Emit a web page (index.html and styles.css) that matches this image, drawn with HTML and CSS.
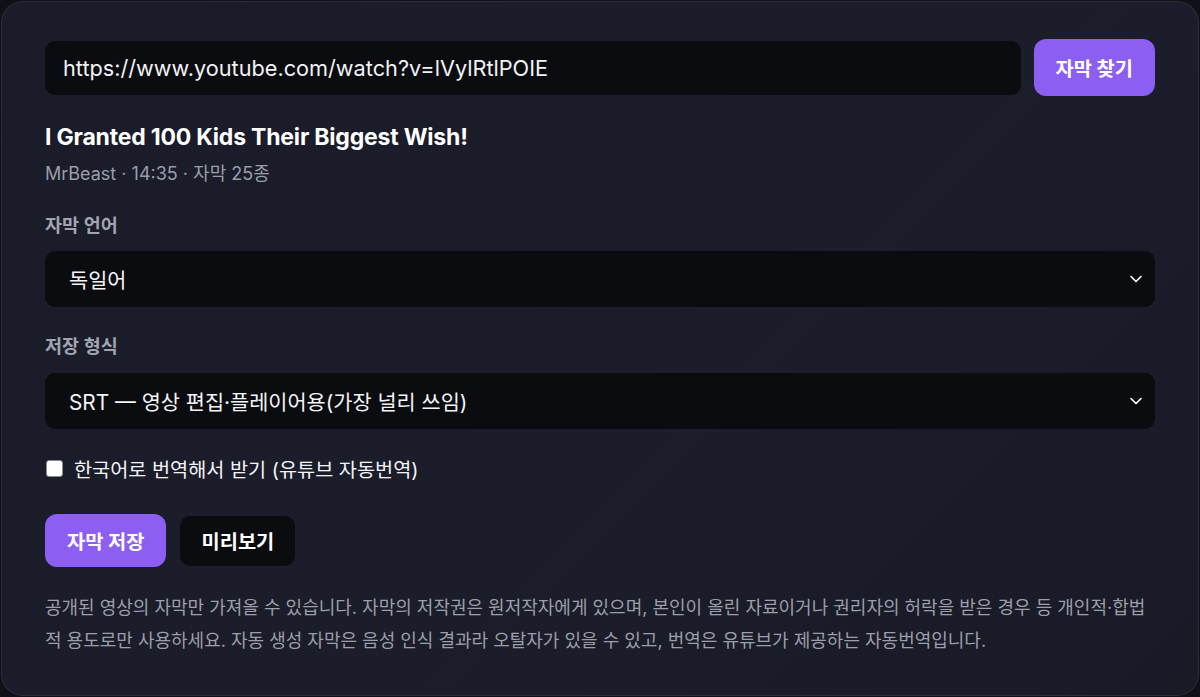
FILE: index.html
```html
<!DOCTYPE html>
<html lang="ko">
<head>
<meta charset="utf-8">
<title>자막 다운로더</title>
<link rel="stylesheet" href="styles.css">
</head>
<body>
<main class="card">
  <div class="url-row">
    <div class="input">https://www.youtube.com/watch?v=lVylRtlPOIE</div>
    <button class="btn btn-primary">자막 찾기</button>
  </div>

  <h1 class="title">I Granted 100 Kids Their Biggest Wish!</h1>
  <p class="meta">MrBeast · 14:35 · 자막 25종</p>

  <label class="label">자막 언어</label>
  <div class="select">
    <span>독일어</span>
    <svg class="chev" width="12" height="8" viewBox="0 0 12 8"><path d="M1 1.5 L6 6.5 L11 1.5" fill="none" stroke="#fff" stroke-width="1.6" stroke-linecap="round" stroke-linejoin="round"/></svg>
  </div>

  <label class="label label-2">저장 형식</label>
  <div class="select">
    <span>SRT — 영상 편집·플레이어용(가장 널리 쓰임)</span>
    <svg class="chev" width="12" height="8" viewBox="0 0 12 8"><path d="M1 1.5 L6 6.5 L11 1.5" fill="none" stroke="#fff" stroke-width="1.6" stroke-linecap="round" stroke-linejoin="round"/></svg>
  </div>

  <label class="check-row">
    <span class="checkbox"></span>
    <span>한국어로 번역해서 받기 (유튜브 자동번역)</span>
  </label>

  <div class="actions">
    <button class="btn btn-primary btn-save">자막 저장</button>
    <button class="btn btn-dark">미리보기</button>
  </div>

  <p class="note">공개된 영상의 자막만 가져올 수 있습니다. 자막의 저작권은 원저작자에게 있으며, 본인이 올린 자료이거나 권리자의 허락을 받은 경우 등 개인적·합법적 용도로만 사용하세요. 자동 생성 자막은 음성 인식 결과라 오탈자가 있을 수 있고, 번역은 유튜브가 제공하는 자동번역입니다.</p>
</main>
</body>
</html>
```

FILE: styles.css
```css
* { box-sizing: border-box; }

html, body {
  margin: 0;
  background: #101118;
}

body {
  padding: 1px;
  font-family: "Inter", "Noto Sans CJK KR", sans-serif;
  color: #f4f4f6;
}

.card {
  height: 695px;
  border: 1px solid rgba(255, 255, 255, 0.08);
  border-radius: 22px;
  background: linear-gradient(135deg, #1a1c29 0%, #1b1d2b 60%, #1a1a27 100%);
  padding: 37px 43px 0 43px;
}

.url-row {
  display: flex;
  align-items: center;
  gap: 13px;
}

.input {
  flex: 1;
  height: 54px;
  display: flex;
  align-items: center;
  padding: 0 18px;
  background: #0b0c10;
  border-radius: 10px;
  font-size: 21.7px;
  color: #f2f2f4;
}

.btn {
  border: 0;
  font-family: "Inter", "Noto Sans CJK KR", sans-serif;
  font-weight: 700;
  font-size: 19.8px;
  color: #ffffff;
  border-radius: 12px;
  cursor: pointer;
}

.btn-primary {
  background: #8c5ff2;
  height: 57px;
  padding: 0 22px;
}

.btn-save {
  height: 53px;
}

.btn-dark {
  background: #0b0c10;
  height: 50px;
  padding: 0 21px;
  border-radius: 10px;
}

.title {
  margin: 27px 0 0;
  font-size: 23px;
  line-height: 28px;
  font-weight: 700;
  letter-spacing: -0.2px;
  color: #ffffff;
}

.meta {
  margin: 11px 0 0;
  font-size: 18px;
  line-height: 24px;
  color: #9a9dab;
}

.label {
  display: block;
  margin: 27px 0 0;
  font-size: 18.5px;
  line-height: 24px;
  font-weight: 600;
  color: #a2a4b1;
}

.select {
  margin-top: 14px;
  height: 56px;
  background: #0b0c10;
  border-radius: 10px;
  padding: 0 13px 0 24px;
  display: flex;
  align-items: center;
  justify-content: space-between;
  font-size: 20.8px;
  color: #f4f4f6;
}

.label-2 {
  margin-top: 27px;
}

.label-2 + .select {
  margin-top: 15px;
}

.chev {
  flex: none;
}

.check-row {
  display: flex;
  align-items: center;
  gap: 11px;
  margin-top: 26px;
  height: 26px;
  font-size: 19.7px;
  color: #f4f4f6;
}

.checkbox {
  width: 17px;
  height: 17px;
  border-radius: 3px;
  background: #ffffff;
  border: 1px solid #8a8a90;
  margin-left: 1px;
}

.actions {
  display: flex;
  align-items: center;
  gap: 14px;
  margin-top: 33px;
}

.note {
  margin: 24px 0 0;
  font-size: 18px;
  line-height: 33px;
  color: #9c9ea9;
}
```
